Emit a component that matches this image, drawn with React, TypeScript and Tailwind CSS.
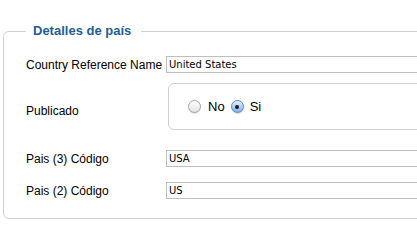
import React from 'react';

const label = "text-[12px] leading-[14px] text-black font-['Liberation_Sans',Arial,sans-serif]";
const field =
  "w-[300px] h-[17px] border border-[#bebebe] bg-white pl-[2px] text-[10px] leading-[15px] text-black outline-none font-['DejaVu_Sans',Verdana,sans-serif]";

const Radio: React.FC<{ checked?: boolean }> = ({ checked }) =>
  checked ? (
    <span className="flex items-center justify-center w-[13px] h-[13px] rounded-full border border-[#5b86bb] bg-gradient-to-b from-[#e3f0fd] to-[#7fb2ea] shadow-[0_1px_1px_rgba(0,0,0,0.15)]">
      <span className="w-[4px] h-[4px] rounded-full bg-[#1c1c1c]" />
    </span>
  ) : (
    <span className="w-[13px] h-[13px] rounded-full border border-[#a3a3a3] bg-gradient-to-b from-[#ffffff] to-[#e2e2e2] shadow-[0_1px_1px_rgba(0,0,0,0.12)]" />
  );

const Row: React.FC<{ title: string; value: string; className?: string }> = ({ title, value, className }) => (
  <div className={`flex items-center ${className ?? ''}`}>
    <div className={`w-[140px] shrink-0 ${label}`}>{title}</div>
    <input readOnly value={value} className={field} />
  </div>
);

export default function App() {
  return (
    <div className="w-[417px] h-[249px] bg-white overflow-hidden pt-[23px] pl-[3px]">
      <fieldset className="w-[450px] border border-[#d0d0d0] rounded-[6px] pl-[22px] pb-[19px]">
        <legend className="pl-[7px] pr-[10px] text-[13px] leading-[16px] font-bold text-[#235d98] font-['Liberation_Sans',Arial,sans-serif]">
          Detalles de país
        </legend>

        <Row title="Country Reference Name" value="United States" className="mt-[17px]" />

        <div className="flex items-start mt-[10px]">
          <div className={`w-[140px] shrink-0 mt-[21px] ${label}`}>Publicado</div>
          <div className="ml-[2px] w-[300px] h-[47px] border border-[#cfcfcf] rounded-[6px] flex items-center pl-[19px] text-[13px] text-black font-['Liberation_Sans',Arial,sans-serif]">
            <Radio />
            <span className="ml-[7px]">No</span>
            <span className="ml-[6px]">
              <Radio checked />
            </span>
            <span className="ml-[6px]">Si</span>
          </div>
        </div>

        <Row title="Pais (3) Código" value="USA" className="mt-[20px]" />
        <Row title="Pais (2) Código" value="US" className="mt-[15px]" />
      </fieldset>
    </div>
  );
}
